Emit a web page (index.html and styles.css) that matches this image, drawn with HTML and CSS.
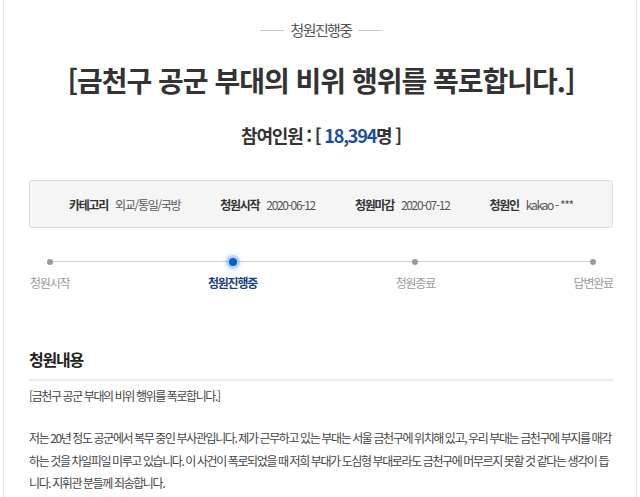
FILE: index.html
```html
<!DOCTYPE html>
<html lang="ko">
<head>
<meta charset="utf-8">
<title>청원진행중</title>
<link rel="stylesheet" href="styles.css">
</head>
<body>
<div class="page">
  <div class="status"><span class="dash"></span><span class="status-text">청원진행중</span><span class="dash"></span></div>
  <h1 class="title">[금천구 공군 부대의 비위 행위를 폭로합니다.]</h1>
  <div class="count">참여인원 : [ <span class="num">18,394</span>명 ]</div>
  <ul class="info">
    <li><b>카테고리</b><span>외교/통일/국방</span></li>
    <li><b>청원시작</b><span>2020-06-12</span></li>
    <li><b>청원마감</b><span>2020-07-12</span></li>
    <li><b>청원인</b><span>kakao - ***</span></li>
  </ul>
  <div class="steps">
    <div class="track"></div>
    <div class="step"><i class="dot"></i><span>청원시작</span></div>
    <div class="step active"><i class="dot"></i><span>청원진행중</span></div>
    <div class="step"><i class="dot"></i><span>청원종료</span></div>
    <div class="step"><i class="dot"></i><span>답변완료</span></div>
  </div>
  <h2 class="section">청원내용</h2>
  <div class="content">
    <p class="lead">[금천구 공군 부대의 비위 행위를 폭로합니다.]</p>
    <p class="body">저는 20년 정도 공군에서 복무 중인 부사관입니다. 제가 근무하고 있는 부대는 서울 금천구에 위치해 있고, 우리 부대는 금천구에 부지를 매각<br>하는 것을 차일피일 미루고 있습니다. 이 사건이 폭로되었을 때 저희 부대가 도심형 부대로라도 금천구에 머무르지 못할 것 같다는 생각이 듭<br>니다. 지휘관 분들께 죄송합니다.</p>
  </div>
</div>
</body>
</html>
```
FILE: styles.css
```css
html, body {
  margin: 0;
  padding: 0;
  background: #fff;
}
body {
  font-family: "Noto Sans CJK KR", "Noto Sans", sans-serif;
  color: #333;
}
.page {
  margin: 0 3px;
  border-left: 1px solid #e4e4e4;
  border-right: 1px solid #e4e4e4;
  min-height: 497px;
  padding: 0 23px 0 25px;
  overflow: hidden;
}
.status {
  display: flex;
  align-items: center;
  justify-content: center;
  gap: 6px;
  padding-top: 19px;
  height: 22px;
}
.dash {
  width: 24px;
  height: 1px;
  background: #c8c8c8;
}
.status-text {
  font-size: 15px;
  letter-spacing: -1.6px;
  color: #555;
  line-height: 22px;
}
.title {
  margin: 18px 0 0;
  text-align: center;
  font-size: 28px;
  font-weight: 700;
  letter-spacing: -1px;
  color: #333;
  line-height: 42px;
}
.count {
  margin-top: 21px;
  text-align: center;
  font-size: 18px;
  font-weight: 700;
  letter-spacing: -1.2px;
  color: #333;
  line-height: 26px;
}
.num {
  color: #1a4d9e;
}
.info {
  list-style: none;
  margin: 32px 0 0;
  padding: 0;
  height: 46px;
  border: 1px solid #dedede;
  border-radius: 3px;
  background: #f5f5f5;
  display: flex;
  align-items: center;
  justify-content: center;
  gap: 40px;
  font-size: 12px;
  letter-spacing: -1.3px;
}
.info li {
  display: flex;
  gap: 7px;
}
.info b {
  color: #333;
  font-weight: 700;
}
.info span {
  color: #555;
}
.steps {
  position: relative;
  display: flex;
  justify-content: space-between;
  margin-top: 27px;
  padding: 0 0 0 1px;
}
.track {
  position: absolute;
  left: 18px;
  right: 19px;
  top: 6px;
  height: 1px;
  background: #d0d0d0;
}
.step {
  position: relative;
  display: flex;
  flex-direction: column;
  align-items: center;
  font-size: 12px;
  letter-spacing: -1.2px;
  color: #9a9a9a;
}
.step span {
  margin-top: 10px;
  line-height: 16px;
}
.dot {
  display: block;
  width: 6px;
  height: 6px;
  margin-top: 4px;
  border-radius: 50%;
  background: #9a9a9a;
}
.step.active .dot {
  width: 8px;
  height: 8px;
  margin-top: 3px;
  margin-bottom: -1px;
  background: #0b5bd3;
  box-shadow: 0 0 0 3px rgba(60, 140, 240, 0.25), 0 0 4px 4px rgba(60, 140, 240, 0.18);
}
.step.active span {
  color: #1c3f7d;
  font-weight: 700;
}
.section {
  margin: 56px 0 0;
  padding-bottom: 8px;
  border-bottom: 2px solid #ececec;
  font-size: 16px;
  font-weight: 700;
  letter-spacing: -1.2px;
  color: #222;
  line-height: 24px;
}
.content {
  font-size: 12px;
  letter-spacing: -1.4px;
  color: #444;
}
.lead {
  margin: 4px 0 0;
  line-height: 22px;
}
.body {
  margin: 20px 0 0;
  line-height: 22.5px;
}
```
